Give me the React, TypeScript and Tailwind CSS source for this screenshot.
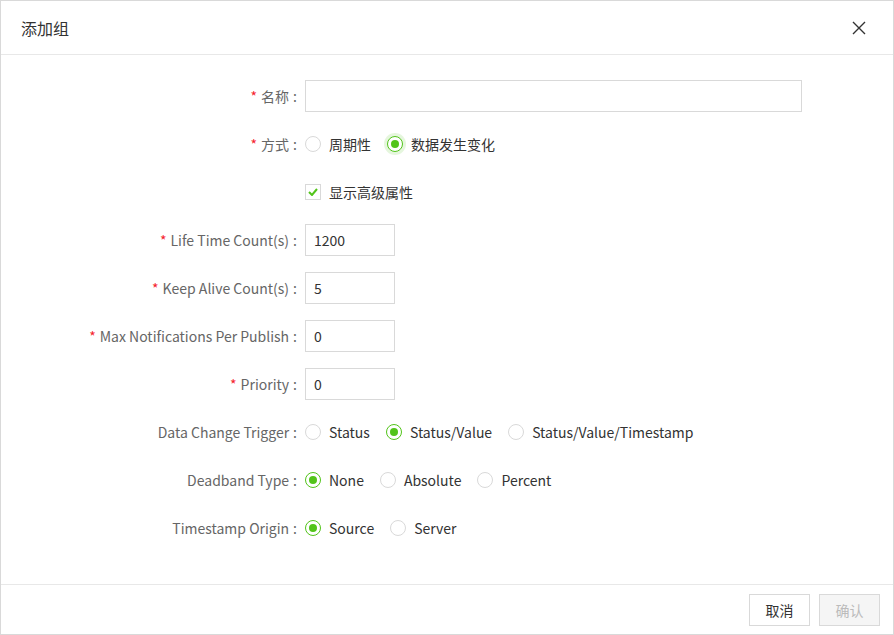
import React from "react";

const font = { fontFamily: '"Noto Sans CJK SC", "Noto Sans", sans-serif' };

function Radio({ label, checked, glow }: { label: string; checked?: boolean; glow?: boolean }) {
  return (
    <label className="flex items-center mr-4">
      <span
        className={
          "flex h-4 w-4 items-center justify-center rounded-full border bg-white " +
          (checked ? "border-[#52c41a]" : "border-[#d9d9d9]") +
          (glow ? " shadow-[0_0_0_3px_rgba(82,196,26,0.15)]" : "")
        }
      >
        {checked && <span className="h-2 w-2 rounded-full bg-[#52c41a]" />}
      </span>
      <span className="ml-2 text-[#333]">{label}</span>
    </label>
  );
}

function Row({
  label,
  required,
  children,
}: {
  label: string;
  required?: boolean;
  children?: React.ReactNode;
}) {
  return (
    <div className="flex h-12 items-center">
      <div className="w-[304px] shrink-0 pr-2 text-right text-[#666]">
        {required && <span className="mr-1 text-[#f5222d]">*</span>}
        {label}
        {label && <span className="ml-[4px]">:</span>}
      </div>
      <div className="flex items-center">{children}</div>
    </div>
  );
}

function SmallInput({ value }: { value: string }) {
  return (
    <div className="flex h-8 w-[90px] items-center border border-[#d9d9d9] px-2 text-[#333]">
      {value}
    </div>
  );
}

export default function App() {
  return (
    <div
      style={font}
      className="flex h-[635px] w-[894px] flex-col border border-[#d9d9d9] bg-white text-sm"
    >
      <div className="flex h-[54px] shrink-0 items-center justify-between border-b border-[#e8e8e8] pl-[20px] pr-[27px]">
        <span className="text-base text-[#333]">添加组</span>
        <svg width="14" height="14" viewBox="0 0 14 14">
          <path d="M1 1L13 13M13 1L1 13" stroke="#333" strokeWidth="1.4" />
        </svg>
      </div>

      <div className="flex-1 pt-[17px]">
        <Row label="名称" required>
          <div className="h-8 w-[497px] border border-[#d9d9d9]" />
        </Row>
        <Row label="方式" required>
          <Radio label="周期性" />
          <Radio label="数据发生变化" checked glow />
        </Row>
        <Row label="">
          <label className="flex items-center">
            <span className="flex h-4 w-4 items-center justify-center border border-[#d9d9d9] bg-white">
              <svg width="10" height="8" viewBox="0 0 10 8">
                <path d="M1 4L4 7L9 1" fill="none" stroke="#52c41a" strokeWidth="2" />
              </svg>
            </span>
            <span className="ml-2 text-[#333]">显示高级属性</span>
          </label>
        </Row>
        <Row label="Life Time Count(s)" required>
          <SmallInput value="1200" />
        </Row>
        <Row label="Keep Alive Count(s)" required>
          <SmallInput value="5" />
        </Row>
        <Row label="Max Notifications Per Publish" required>
          <SmallInput value="0" />
        </Row>
        <Row label="Priority" required>
          <SmallInput value="0" />
        </Row>
        <Row label="Data Change Trigger">
          <Radio label="Status" />
          <Radio label="Status/Value" checked />
          <Radio label="Status/Value/Timestamp" />
        </Row>
        <Row label="Deadband Type">
          <Radio label="None" checked />
          <Radio label="Absolute" />
          <Radio label="Percent" />
        </Row>
        <Row label="Timestamp Origin">
          <Radio label="Source" checked />
          <Radio label="Server" />
        </Row>
      </div>

      <div className="flex h-[50px] shrink-0 items-center justify-end gap-[9px] border-t border-[#e8e8e8] pr-[13px]">
        <button className="h-8 w-[61px] border border-[#d9d9d9] bg-white text-[#333]">取消</button>
        <button className="h-8 w-[61px] border border-[#d9d9d9] bg-[#f5f5f5] text-[#bbb]">确认</button>
      </div>
    </div>
  );
}
